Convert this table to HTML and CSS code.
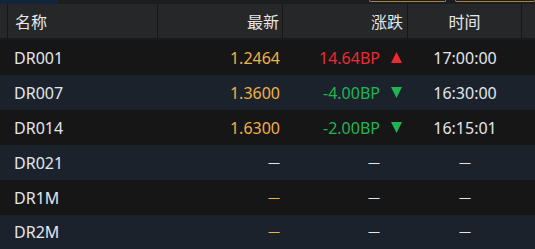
FILE: index.html
```html
<!DOCTYPE html>
<html lang="zh">
<head>
<meta charset="utf-8">
<link rel="stylesheet" href="styles.css">
</head>
<body>
<div class="topbar">
  <div class="tb-nav"></div>
  <div class="tb-fill"></div>
  <div class="tb-btn tb-btn1"></div>
  <div class="tb-btn tb-btn2"></div>
</div>
<div class="table">
  <div class="row head">
    <div class="c c0"></div>
    <div class="c c1">名称</div>
    <div class="c c2">最新</div>
    <div class="c c3">涨跌</div>
    <div class="c c4">时间</div>
    <div class="c c5"></div>
  </div>
  <div class="row odd">
    <div class="c c0"></div>
    <div class="c c1">DR001</div>
    <div class="c c2 orange">1.2464</div>
    <div class="c c3 red">14.64BP<svg class="tri" viewBox="0 0 11 11"><polygon points="5.5,0 11,11 0,11" fill="#ee2a33"/></svg></div>
    <div class="c c4">17:00:00</div>
    <div class="c c5"></div>
  </div>
  <div class="row even">
    <div class="c c0"></div>
    <div class="c c1">DR007</div>
    <div class="c c2 orange">1.3600</div>
    <div class="c c3 green">-4.00BP<svg class="tri" viewBox="0 0 11 11"><polygon points="0,0 11,0 5.5,11" fill="#1fb553"/></svg></div>
    <div class="c c4">16:30:00</div>
    <div class="c c5"></div>
  </div>
  <div class="row odd">
    <div class="c c0"></div>
    <div class="c c1">DR014</div>
    <div class="c c2 orange">1.6300</div>
    <div class="c c3 green">-2.00BP<svg class="tri" viewBox="0 0 11 11"><polygon points="0,0 11,0 5.5,11" fill="#1fb553"/></svg></div>
    <div class="c c4">16:15:01</div>
    <div class="c c5"></div>
  </div>
  <div class="row even">
    <div class="c c0"></div>
    <div class="c c1">DR021</div>
    <div class="c c2"><span class="dash">—</span></div>
    <div class="c c3"><span class="dash">—</span><span class="tri-space"></span></div>
    <div class="c c4"><span class="dash">—</span></div>
    <div class="c c5"></div>
  </div>
  <div class="row odd">
    <div class="c c0"></div>
    <div class="c c1">DR1M</div>
    <div class="c c2"><span class="dash orange">—</span></div>
    <div class="c c3"><span class="dash">—</span><span class="tri-space"></span></div>
    <div class="c c4"><span class="dash">—</span></div>
    <div class="c c5"></div>
  </div>
  <div class="row even last">
    <div class="c c0"></div>
    <div class="c c1">DR2M</div>
    <div class="c c2"><span class="dash orange">—</span></div>
    <div class="c c3"><span class="dash">—</span><span class="tri-space"></span></div>
    <div class="c c4"><span class="dash">—</span></div>
    <div class="c c5"></div>
  </div>
</div>
</body>
</html>
```

FILE: styles.css
```css
html, body {
  margin: 0;
  padding: 0;
  background: #161616;
  width: 535px;
  height: 249px;
  overflow: hidden;
  font-family: "Noto Sans", "Noto Sans CJK SC", sans-serif;
  font-size: 16px;
  color: #e2e6ec;
}
.topbar {
  display: flex;
  height: 4px;
  background: #1d1d1e;
}
.tb-nav {
  width: 60px;
  background: #14243a;
}
.tb-fill {
  width: 320px;
}
.tb-btn {
  height: 1px;
  border: 1px solid #a8834f;
  border-top: none;
  border-radius: 0 0 2px 2px;
}
.tb-btn1 {
  width: 77px;
}
.tb-btn2 {
  margin-left: 9px;
  width: 80px;
}
.table {
  display: flex;
  flex-direction: column;
}
.row {
  display: grid;
  grid-template-columns: 8px 150px 125px 125px 114px 13px;
  height: 35px;
  align-items: center;
}
.row .c {
  display: flex;
  align-items: center;
  height: 100%;
  box-sizing: border-box;
  white-space: nowrap;
}
.head {
  height: 34px;
  background: #262729;
  border-bottom: 2px solid #1a1a1b;
}
.head .c {
  border-right: 1px solid #161617;
  font-family: "Noto Sans CJK SC", sans-serif;
  font-size: 16px;
  color: #e6e8ea;
}
.head .c5 {
  border-right: none;
}
.head .c1 {
  padding-left: 7px;
}
.head .c2 {
  justify-content: flex-end;
  padding-right: 3px;
}
.head .c3 {
  justify-content: flex-end;
  padding-right: 4px;
}
.head .c4 {
  justify-content: center;
}
.odd {
  background: #161616;
}
.even {
  background: #1c222c;
}
.last {
  height: 34px;
  border-bottom: 1px dashed #80858c;
}
.c1 {
  padding-left: 6px;
}
.c2 {
  justify-content: flex-end;
  padding-right: 3px;
}
.c3 {
  justify-content: flex-end;
  padding-right: 6px;
}
.c4 {
  justify-content: center;
}
.orange {
  color: #f2b140;
}
.red {
  color: #ee2a33;
}
.green {
  color: #1fb553;
}
.tri {
  width: 11px;
  height: 11px;
  margin-left: 11px;
}
.tri-space {
  display: inline-block;
  width: 22px;
}
.dash {
  font-size: 12px;
  line-height: 1;
}
```
